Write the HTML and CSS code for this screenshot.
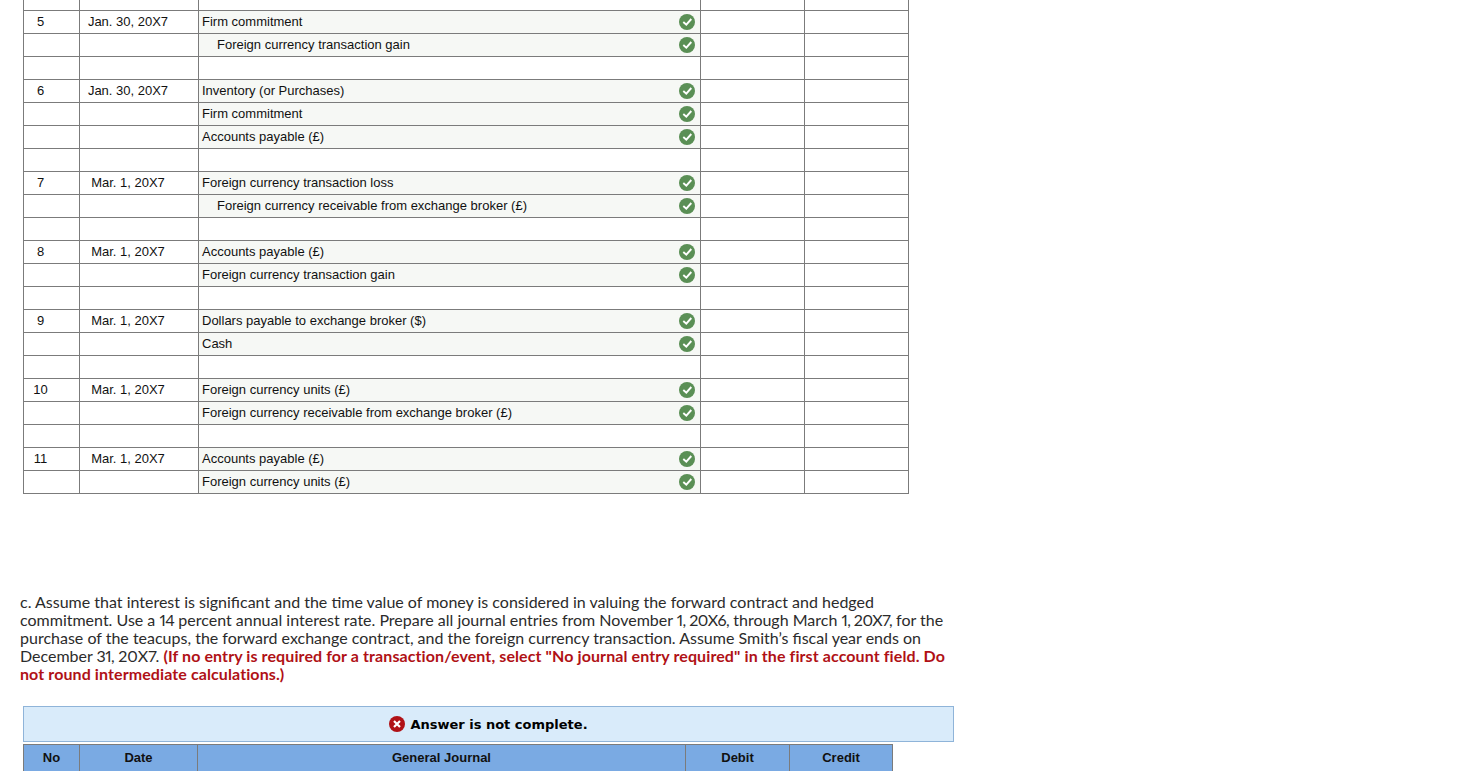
FILE: index.html
```html
<!DOCTYPE html>
<html lang="en">
<head>
<meta charset="utf-8">
<title>Journal entries</title>
<link rel="stylesheet" href="styles.css">
</head>
<body>
<svg class="defs" width="0" height="0" aria-hidden="true">
  <symbol id="ok" viewBox="0 0 16 16"><circle cx="8" cy="8" r="8" fill="#5a8f55"/><path d="M4.3 8l3 2.6 5-5.6" fill="none" stroke="#fff" stroke-width="1.9"/></symbol>
</svg>
<table class="journal">
  <colgroup><col class="c-no"><col class="c-date"><col class="c-acct"><col class="c-amt"><col class="c-amt"></colgroup>
  <tbody>
    <tr class="stub"><td></td><td></td><td class="blank"></td><td></td><td></td></tr>
    <tr><td class="no">5</td><td class="date">Jan. 30, 20X7</td><td class="acct"><div class="acct-row"><span>Firm commitment</span><svg class="ok"><use href="#ok"/></svg></div></td><td></td><td></td></tr>
    <tr><td></td><td></td><td class="acct"><div class="acct-row credit"><span>Foreign currency transaction gain</span><svg class="ok"><use href="#ok"/></svg></div></td><td></td><td></td></tr>
    <tr><td></td><td></td><td></td><td></td><td></td></tr>
    <tr><td class="no">6</td><td class="date">Jan. 30, 20X7</td><td class="acct"><div class="acct-row"><span>Inventory (or Purchases)</span><svg class="ok"><use href="#ok"/></svg></div></td><td></td><td></td></tr>
    <tr><td></td><td></td><td class="acct"><div class="acct-row"><span>Firm commitment</span><svg class="ok"><use href="#ok"/></svg></div></td><td></td><td></td></tr>
    <tr><td></td><td></td><td class="acct"><div class="acct-row"><span>Accounts payable (£)</span><svg class="ok"><use href="#ok"/></svg></div></td><td></td><td></td></tr>
    <tr><td></td><td></td><td></td><td></td><td></td></tr>
    <tr><td class="no">7</td><td class="date">Mar. 1, 20X7</td><td class="acct"><div class="acct-row"><span>Foreign currency transaction loss</span><svg class="ok"><use href="#ok"/></svg></div></td><td></td><td></td></tr>
    <tr><td></td><td></td><td class="acct"><div class="acct-row credit"><span>Foreign currency receivable from exchange broker (£)</span><svg class="ok"><use href="#ok"/></svg></div></td><td></td><td></td></tr>
    <tr><td></td><td></td><td></td><td></td><td></td></tr>
    <tr><td class="no">8</td><td class="date">Mar. 1, 20X7</td><td class="acct"><div class="acct-row"><span>Accounts payable (£)</span><svg class="ok"><use href="#ok"/></svg></div></td><td></td><td></td></tr>
    <tr><td></td><td></td><td class="acct"><div class="acct-row"><span>Foreign currency transaction gain</span><svg class="ok"><use href="#ok"/></svg></div></td><td></td><td></td></tr>
    <tr><td></td><td></td><td></td><td></td><td></td></tr>
    <tr><td class="no">9</td><td class="date">Mar. 1, 20X7</td><td class="acct"><div class="acct-row"><span>Dollars payable to exchange broker ($)</span><svg class="ok"><use href="#ok"/></svg></div></td><td></td><td></td></tr>
    <tr><td></td><td></td><td class="acct"><div class="acct-row"><span>Cash</span><svg class="ok"><use href="#ok"/></svg></div></td><td></td><td></td></tr>
    <tr><td></td><td></td><td></td><td></td><td></td></tr>
    <tr><td class="no">10</td><td class="date">Mar. 1, 20X7</td><td class="acct"><div class="acct-row"><span>Foreign currency units (£)</span><svg class="ok"><use href="#ok"/></svg></div></td><td></td><td></td></tr>
    <tr><td></td><td></td><td class="acct"><div class="acct-row"><span>Foreign currency receivable from exchange broker (£)</span><svg class="ok"><use href="#ok"/></svg></div></td><td></td><td></td></tr>
    <tr><td></td><td></td><td></td><td></td><td></td></tr>
    <tr><td class="no">11</td><td class="date">Mar. 1, 20X7</td><td class="acct"><div class="acct-row"><span>Accounts payable (£)</span><svg class="ok"><use href="#ok"/></svg></div></td><td></td><td></td></tr>
    <tr><td></td><td></td><td class="acct"><div class="acct-row"><span>Foreign currency units (£)</span><svg class="ok"><use href="#ok"/></svg></div></td><td></td><td></td></tr>
  </tbody>
</table>
<p class="question">c. Assume that interest is significant and the time value of money is considered in valuing the forward contract and hedged<br>commitment. Use a <span class="num">14</span> percent annual interest rate. Prepare all journal entries from November <span class="num">1, 20X6,</span> through March <span class="num">1, 20X7,</span> for the<br>purchase of the teacups, the forward exchange contract, and the foreign currency transaction. Assume Smith’s fiscal year ends on<br>December <span class="num">31,</span> 20X7. <strong class="note">(If no entry is required for a transaction/event, select "No journal entry required" in the first account field. Do<br>not round intermediate calculations.)</strong></p>
<div class="banner">
  <svg class="err" viewBox="0 0 16 16" aria-hidden="true"><circle cx="8" cy="8" r="8" fill="#b01116"/><path d="M5 5l6 6M11 5l-6 6" fill="none" stroke="#fff" stroke-width="2.2"/></svg>
  <span>Answer is not complete.</span>
</div>
<table class="answer">
  <colgroup><col class="a-no"><col class="a-date"><col class="a-acct"><col class="a-amt"><col class="a-amt2"></colgroup>
  <thead><tr><th>No</th><th>Date</th><th>General Journal</th><th>Debit</th><th>Credit</th></tr></thead>
</table>
</body>
</html>
```

FILE: styles.css
```css
html, body { margin: 0; padding: 0; background: #fff; }
body { height: 771px; overflow: hidden; font-family: "Liberation Sans", Arial, sans-serif; color: #111; }
.defs { position: absolute; }

.journal { border-collapse: collapse; table-layout: fixed; width: 886px; margin-left: 23px; font-size: 13px; line-height: 14px; }
.journal td { border: 1px solid #7b7b7b; height: 22px; padding: 0; box-sizing: content-box; }
.journal .stub td { height: 10px; border-top: 0; }
.c-no { width: 56px; }
.c-date { width: 119px; }
.c-acct { width: 502px; }
.c-amt { width: 104px; }
.journal td.no, .journal td.date { text-align: center; padding-right: 22px; vertical-align: top; line-height: 21px; height: 22px; }
.journal td.acct { background: #f6f8f5; }
.acct-row { display: flex; align-items: center; justify-content: space-between; height: 22px; padding: 0 5px 0 3px; }
.acct-row span { margin-top: -1px; }
.credit { padding-left: 18px; }
.ok { width: 16px; height: 16px; flex: none; }

.question { margin: 99px 0 0 20px; font-family: Lato, "Open Sans", sans-serif; font-size: 16px; font-variant-numeric: proportional-nums; line-height: 18px; color: #2b2b2b; white-space: nowrap; }
.num { letter-spacing: -0.55px; }
.note { color: #b01116; font-weight: 700; letter-spacing: 0.1px; }

.banner { display: flex; align-items: center; justify-content: center; gap: 5px; box-sizing: border-box; width: 931px; height: 36px; margin: 23px 0 0 23px; background: #d9ebfa; border: 1px solid #8fb4d9; font-family: "DejaVu Sans", Verdana, sans-serif; font-weight: 700; font-size: 13px; color: #000; }
.err { width: 16px; height: 16px; flex: none; }

.answer { border-collapse: collapse; table-layout: fixed; width: 869px; margin: 2px 0 0 23px; }
.answer th { height: 24px; padding: 0 0 7px; background: #7aaae3; border: 1px solid #7b7b7b; font-weight: 700; font-size: 13px; color: #111; }
.a-no { width: 56px; }
.a-date { width: 118px; }
.a-acct { width: 488px; }
.a-amt { width: 104px; }
.a-amt2 { width: 103px; }
```
